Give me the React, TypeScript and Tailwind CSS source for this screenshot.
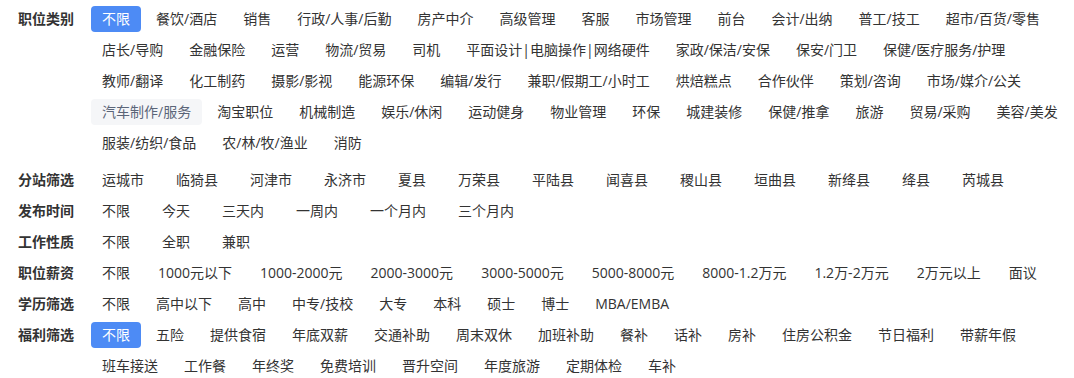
import React from 'react'

type Group = {
  label: string
  rows: string[][]
  gap: string
  active?: string
  hover?: string
  extra?: string
}

const groups: Group[] = [
  {
    label: '职位类别',
    gap: 'gap-x-[4px]',
    active: '不限',
    hover: '汽车制作/服务',
    extra: 'mb-[11px]',
    rows: [
      ['不限', '餐饮/酒店', '销售', '行政/人事/后勤', '房产中介', '高级管理', '客服', '市场管理', '前台', '会计/出纳', '普工/技工', '超市/百货/零售'],
      ['店长/导购', '金融保险', '运营', '物流/贸易', '司机', '平面设计|电脑操作|网络硬件', '家政/保洁/安保', '保安/门卫', '保健/医疗服务/护理'],
      ['教师/翻译', '化工制药', '摄影/影视', '能源环保', '编辑/发行', '兼职/假期工/小时工', '烘焙糕点', '合作伙伴', '策划/咨询', '市场/媒介/公关'],
      ['汽车制作/服务', '淘宝职位', '机械制造', '娱乐/休闲', '运动健身', '物业管理', '环保', '城建装修', '保健/推拿', '旅游', '贸易/采购', '美容/美发'],
      ['服装/纺织/食品', '农/林/牧/渔业', '消防'],
    ],
  },
  {
    label: '分站筛选',
    gap: 'gap-x-[10px]',
    rows: [['运城市', '临猗县', '河津市', '永济市', '夏县', '万荣县', '平陆县', '闻喜县', '稷山县', '垣曲县', '新绛县', '绛县', '芮城县']],
  },
  {
    label: '发布时间',
    gap: 'gap-x-[10px]',
    rows: [['不限', '今天', '三天内', '一周内', '一个月内', '三个月内']],
  },
  {
    label: '工作性质',
    gap: 'gap-x-[10px]',
    rows: [['不限', '全职', '兼职']],
  },
  {
    label: '职位薪资',
    gap: 'gap-x-[6px]',
    rows: [['不限', '1000元以下', '1000-2000元', '2000-3000元', '3000-5000元', '5000-8000元', '8000-1.2万元', '1.2万-2万元', '2万元以上', '面议']],
  },
  {
    label: '学历筛选',
    gap: 'gap-x-[4px]',
    rows: [['不限', '高中以下', '高中', '中专/技校', '大专', '本科', '硕士', '博士', 'MBA/EMBA']],
  },
  {
    label: '福利筛选',
    gap: 'gap-x-[4px]',
    active: '不限',
    rows: [
      ['不限', '五险', '提供食宿', '年底双薪', '交通补助', '周末双休', '加班补助', '餐补', '话补', '房补', '住房公积金', '节日福利', '带薪年假'],
      ['班车接送', '工作餐', '年终奖', '免费培训', '晋升空间', '年度旅游', '定期体检', '车补'],
    ],
  },
]

function Item({ text, active, hover }: { text: string; active?: boolean; hover?: boolean }) {
  let cls = 'text-[#333]'
  if (active) cls = 'bg-[#4d8bf5] text-white'
  else if (hover) cls = 'bg-[#f5f6f8] text-[#5b6578]'
  return (
    <a className={`h-[26px] leading-[26px] px-[11px] rounded-[4px] whitespace-nowrap cursor-pointer ${cls}`}>
      {text}
    </a>
  )
}

export default function App() {
  return (
    <div className="min-h-screen bg-white pt-[6px] pl-[18px] text-[14px] font-['Open_Sans','Noto_Sans_CJK_SC',sans-serif] overflow-hidden">
      {groups.map((g) => (
        <div key={g.label} className={`flex ${g.extra ?? 'mb-[5px]'}`}>
          <div className="w-[73px] shrink-0 h-[26px] leading-[26px] font-bold text-[#333]">{g.label}</div>
          <div className="flex flex-col gap-y-[5px]">
            {g.rows.map((row, ri) => (
              <div key={ri} className={`flex ${g.gap}`}>
                {row.map((t, i) => (
                  <Item
                    key={t}
                    text={t}
                    active={ri === 0 && i === 0 && g.active === t}
                    hover={g.hover === t}
                  />
                ))}
              </div>
            ))}
          </div>
        </div>
      ))}
    </div>
  )
}
